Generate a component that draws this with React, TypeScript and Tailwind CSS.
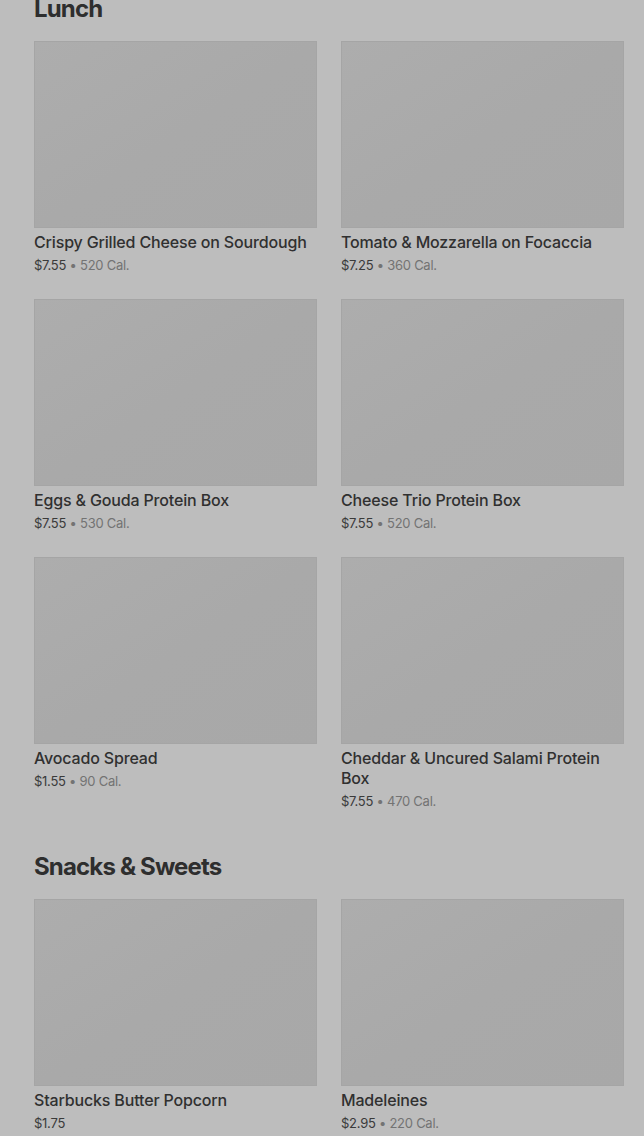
type Item = { name: string; price: string; cal?: string };

const lunch: Item[] = [
  { name: "Crispy Grilled Cheese on Sourdough", price: "$7.55", cal: "520 Cal." },
  { name: "Tomato & Mozzarella on Focaccia", price: "$7.25", cal: "360 Cal." },
  { name: "Eggs & Gouda Protein Box", price: "$7.55", cal: "530 Cal." },
  { name: "Cheese Trio Protein Box", price: "$7.55", cal: "520 Cal." },
  { name: "Avocado Spread", price: "$1.55", cal: "90 Cal." },
  { name: "Cheddar & Uncured Salami Protein Box", price: "$7.55", cal: "470 Cal." },
];

const snacks: Item[] = [
  { name: "Starbucks Butter Popcorn", price: "$1.75" },
  { name: "Madeleines", price: "$2.95", cal: "220 Cal." },
];

function ItemCard({ item }: { item: Item }) {
  return (
    <div className="flex flex-col">
      <div className="h-[187px] w-full border border-[#a5a5a5] bg-gradient-to-br from-[#adadad] via-[#a9a9a9] to-[#a8a8a8]" />
      <div className="mt-[4px] text-[16px] font-medium leading-[20px] tracking-[-0.01em] text-[#303030]">
        {item.name}
      </div>
      <div className="mt-[3px] text-[13px] leading-[20px] tracking-[-0.02em]">
        <span className="text-[#3a3a3a]">{item.price}</span>
        {item.cal && <span className="text-[#737373]"> • {item.cal}</span>}
      </div>
    </div>
  );
}

function Section({ title, items, first }: { title: string; items: Item[]; first?: boolean }) {
  return (
    <section className={first ? "-mt-[7px]" : "mt-[40px]"}>
      <h2 className="text-[24px] font-bold leading-[32px] tracking-[-0.035em] text-[#2e2e2e]">{title}</h2>
      <div className="mt-[16px] grid grid-cols-2 gap-x-[24px] gap-y-[24px]">
        {items.map((item) => (
          <ItemCard key={item.name} item={item} />
        ))}
      </div>
    </section>
  );
}

export default function App() {
  return (
    <div
      className="min-h-[1136px] overflow-hidden bg-[#bdbdbd] pl-[34px] pr-[20px]"
      style={{ fontFamily: "Inter, 'Liberation Sans', sans-serif" }}
    >
      <Section title="Lunch" items={lunch} first />
      <Section title="Snacks & Sweets" items={snacks} />
    </div>
  );
}
